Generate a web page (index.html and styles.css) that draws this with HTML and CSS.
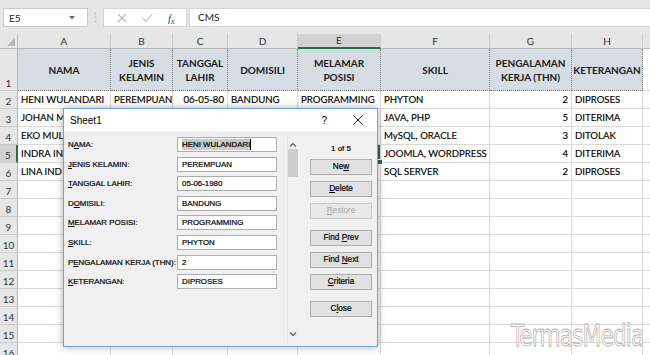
FILE: index.html
```html
<!DOCTYPE html>
<html>
<head>
<meta charset="utf-8">
<link rel="stylesheet" href="styles.css">
</head>
<body>
<div class="app">
  <div class="fbar">
    <div class="namebox"><span>E5</span>
      <svg class="nb-caret" width="6" height="4" viewBox="0 0 6 4"><path d="M0 0h6L3 3.5z" fill="#6a6a6a"/></svg>
    </div>
    <div class="fdots">
      <svg width="3" height="11" viewBox="0 0 3 11"><circle cx="1.5" cy="1.5" r="1" fill="#c4c4c4"/><circle cx="1.5" cy="5.5" r="1" fill="#c4c4c4"/><circle cx="1.5" cy="9.5" r="1" fill="#c4c4c4"/></svg>
    </div>
    <div class="fxbox">
      <svg width="10" height="10" viewBox="0 0 10 10"><path d="M1 1L9 9M9 1L1 9" stroke="#b8b8b8" stroke-width="1.1"/></svg>
      <svg width="11" height="10" viewBox="0 0 11 10"><path d="M1 5.5L4 8.5L10 1.5" stroke="#b8b8b8" stroke-width="1.1" fill="none"/></svg>
      <span class="fx">f<span class="fxs">x</span></span>
    </div>
    <div class="finput">CMS</div>
  </div>

  <div class="sheet">
    <div class="row hdr">
      <div class="corner"><svg width="8" height="8" viewBox="0 0 8 8"><path d="M8 0V8H0z" fill="#b5b5b5"/></svg></div>
      <div class="ch">A</div><div class="ch">B</div><div class="ch">C</div><div class="ch">D</div>
      <div class="ch sel">E</div><div class="ch">F</div><div class="ch">G</div><div class="ch">H</div><div class="ch"></div>
    </div>
    <div class="row r1">
      <div class="rh">1</div>
      <div class="th">NAMA</div>
      <div class="th">JENIS<br>KELAMIN</div>
      <div class="th">TANGGAL<br>LAHIR</div>
      <div class="th">DOMISILI</div>
      <div class="th">MELAMAR<br>POSISI</div>
      <div class="th">SKILL</div>
      <div class="th">PENGALAMAN<br>KERJA (THN)</div>
      <div class="th">KETERANGAN</div>
      <div class="c"></div>
    </div>
    <div class="row">
      <div class="rh">2</div>
      <div class="c">HENI WULANDARI</div><div class="c">PEREMPUAN</div><div class="c num">06-05-80</div><div class="c">BANDUNG</div><div class="c">PROGRAMMING</div><div class="c">PHYTON</div><div class="c num">2</div><div class="c">DIPROSES</div><div class="c"></div>
    </div>
    <div class="row">
      <div class="rh">3</div>
      <div class="c">JOHAN M</div><div class="c"></div><div class="c"></div><div class="c"></div><div class="c"></div><div class="c">JAVA, PHP</div><div class="c num">5</div><div class="c">DITERIMA</div><div class="c"></div>
    </div>
    <div class="row">
      <div class="rh">4</div>
      <div class="c">EKO MUL</div><div class="c"></div><div class="c"></div><div class="c"></div><div class="c"></div><div class="c">MySQL, ORACLE</div><div class="c num">3</div><div class="c">DITOLAK</div><div class="c"></div>
    </div>
    <div class="row">
      <div class="rh sel">5</div>
      <div class="c">INDRA IN</div><div class="c"></div><div class="c"></div><div class="c"></div><div class="c active">CMS</div><div class="c">JOOMLA, WORDPRESS</div><div class="c num">4</div><div class="c">DITERIMA</div><div class="c"></div>
    </div>
    <div class="row">
      <div class="rh">6</div>
      <div class="c">LINA IND</div><div class="c"></div><div class="c"></div><div class="c"></div><div class="c"></div><div class="c">SQL SERVER</div><div class="c num">2</div><div class="c">DIPROSES</div><div class="c"></div>
    </div>
    <div class="row"><div class="rh">7</div><div class="c"></div><div class="c"></div><div class="c"></div><div class="c"></div><div class="c"></div><div class="c"></div><div class="c"></div><div class="c"></div><div class="c"></div></div>
    <div class="row"><div class="rh">8</div><div class="c"></div><div class="c"></div><div class="c"></div><div class="c"></div><div class="c"></div><div class="c"></div><div class="c"></div><div class="c"></div><div class="c"></div></div>
    <div class="row"><div class="rh">9</div><div class="c"></div><div class="c"></div><div class="c"></div><div class="c"></div><div class="c"></div><div class="c"></div><div class="c"></div><div class="c"></div><div class="c"></div></div>
    <div class="row"><div class="rh">10</div><div class="c"></div><div class="c"></div><div class="c"></div><div class="c"></div><div class="c"></div><div class="c"></div><div class="c"></div><div class="c"></div><div class="c"></div></div>
    <div class="row"><div class="rh">11</div><div class="c"></div><div class="c"></div><div class="c"></div><div class="c"></div><div class="c"></div><div class="c"></div><div class="c"></div><div class="c"></div><div class="c"></div></div>
    <div class="row"><div class="rh">12</div><div class="c"></div><div class="c"></div><div class="c"></div><div class="c"></div><div class="c"></div><div class="c"></div><div class="c"></div><div class="c"></div><div class="c"></div></div>
    <div class="row"><div class="rh">13</div><div class="c"></div><div class="c"></div><div class="c"></div><div class="c"></div><div class="c"></div><div class="c"></div><div class="c"></div><div class="c"></div><div class="c"></div></div>
    <div class="row"><div class="rh">14</div><div class="c"></div><div class="c"></div><div class="c"></div><div class="c"></div><div class="c"></div><div class="c"></div><div class="c"></div><div class="c"></div><div class="c"></div></div>
    <div class="row"><div class="rh">15</div><div class="c"></div><div class="c"></div><div class="c"></div><div class="c"></div><div class="c"></div><div class="c"></div><div class="c"></div><div class="c"></div><div class="c"></div></div>
    <div class="row"><div class="rh">16</div><div class="c"></div><div class="c"></div><div class="c"></div><div class="c"></div><div class="c"></div><div class="c"></div><div class="c"></div><div class="c"></div><div class="c"></div></div>
  </div>

  <div class="dialog">
    <div class="dtitle">
      <span class="dname">Sheet1</span>
      <span class="dhelp">?</span>
      <svg class="dclose" width="10" height="10" viewBox="0 0 10 10"><path d="M0.5 0.5L9.5 9.5M9.5 0.5L0.5 9.5" stroke="#222" stroke-width="1"/></svg>
    </div>
    <div class="dbody">
      <div class="form">
        <label>N<u>A</u>MA:</label><div class="tb"><span class="hl">HENI WULANDARI</span><span class="caret"></span></div>
        <label><u>J</u>ENIS KELAMIN:</label><div class="tb">PEREMPUAN</div>
        <label><u>T</u>ANGGAL LAHIR:</label><div class="tb">05-06-1980</div>
        <label>D<u>O</u>MISILI:</label><div class="tb">BANDUNG</div>
        <label><u>M</u>ELAMAR POSISI:</label><div class="tb">PROGRAMMING</div>
        <label><u>S</u>KILL:</label><div class="tb">PHYTON</div>
        <label>P<u>E</u>NGALAMAN KERJA (THN):</label><div class="tb">2</div>
        <label><u>K</u>ETERANGAN:</label><div class="tb">DIPROSES</div>
      </div>
      <div class="vscroll">
        <svg class="arr" width="8" height="5" viewBox="0 0 8 5"><path d="M1 4.5L4 1.5L7 4.5" stroke="#555" stroke-width="1.1" fill="none"/></svg>
        <div class="thumb"></div>
        <div class="track"></div>
        <svg class="arr" width="8" height="5" viewBox="0 0 8 5"><path d="M1 0.5L4 3.5L7 0.5" stroke="#555" stroke-width="1.1" fill="none"/></svg>
      </div>
      <div class="btns">
        <div class="count">1 of 5</div>
        <div class="btn">Ne<u>w</u></div>
        <div class="btn"><u>D</u>elete</div>
        <div class="btn dis"><u>R</u>estore</div>
        <div class="btn sp">Find <u>P</u>rev</div>
        <div class="btn">Find <u>N</u>ext</div>
        <div class="btn"><u>C</u>riteria</div>
        <div class="btn sp">C<u>l</u>ose</div>
      </div>
    </div>
  </div>

  <div class="watermark">TermasMedia</div>
</div>
</body>
</html>
```

FILE: styles.css
```css
html, body {
  margin: 0;
  padding: 0;
  background: #fff;
}
.app {
  position: relative;
  width: 650px;
  height: 355px;
  overflow: hidden;
  font-family: "Lato", "Liberation Sans", sans-serif;
}

/* formula bar */
.fbar {
  height: 34px;
  box-sizing: border-box;
  background: #e6e6e6;
  display: flex;
  align-items: flex-start;
  padding: 8px 0 0 3px;
}
.namebox {
  width: 85px;
  height: 19px;
  box-sizing: border-box;
  background: #fff;
  border: 1px solid #c9c9c9;
  display: flex;
  align-items: center;
  justify-content: space-between;
  padding: 0 12px 0 5px;
  font-size: 10px;
  color: #222;
}
.fdots {
  width: 15px;
  height: 19px;
  display: flex;
  align-items: center;
  justify-content: center;
}
.fxbox {
  width: 84px;
  height: 19px;
  box-sizing: border-box;
  background: #fff;
  border: 1px solid #d4d4d4;
  display: flex;
  align-items: center;
  justify-content: space-around;
  padding: 0 4px 0 6px;
}
.fx {
  font-family: "Liberation Serif", serif;
  font-style: italic;
  font-size: 11px;
  color: #444;
}
.fxs {
  font-size: 8px;
  position: relative;
  top: 2px;
}
.finput {
  flex: 1;
  height: 19px;
  box-sizing: border-box;
  margin-left: 2px;
  background: #fff;
  border: 1px solid #d4d4d4;
  border-right: none;
  font-size: 10px;
  line-height: 17px;
  padding-left: 8px;
  color: #222;
}

/* sheet */
.row {
  display: grid;
  grid-template-columns: 18px 93px 62px 55px 70px 83px 109px 82px 71px 20px;
  height: 18px;
}
.row.hdr { height: 15px; }
.row.r1 { height: 42px; }
.corner {
  background: #e6e6e6;
  border-right: 1px solid #c6c6c6;
  border-bottom: 1px solid #b8b8b8;
  display: flex;
  align-items: flex-end;
  justify-content: flex-end;
  padding: 0 2px 2px 0;
}
.ch {
  background: #e6e6e6;
  border-right: 1px solid #cdcdcd;
  border-bottom: 1px solid #b8b8b8;
  text-align: center;
  font-size: 10px;
  line-height: 14px;
  color: #333;
}
.ch.sel {
  background: #d2d2d2;
  border-bottom: 2px solid #217346;
  line-height: 13px;
}
.rh {
  background: #e6e6e6;
  border-right: 1px solid #b8b8b8;
  border-bottom: 1px solid #cdcdcd;
  font-size: 10px;
  color: #333;
  display: flex;
  align-items: flex-end;
  justify-content: center;
  padding-bottom: 1px;
  line-height: 12px;
}
.rh.sel {
  background: #d2d2d2;
  border-right: 2px solid #217346;
}
.c {
  border-right: 1px solid #dadada;
  border-bottom: 1px solid #dadada;
  font-size: 9.6px;
  line-height: 17px;
  padding: 0 3px;
  white-space: nowrap;
  color: #000;
  overflow: visible;
  -webkit-text-stroke: 0.15px #000;
}
.c.num { text-align: right; }
.c.active {
  position: relative;
  box-shadow: inset 0 0 0 2px #217346;
}
.c.active::after {
  content: "";
  position: absolute;
  right: -3px;
  bottom: -3px;
  width: 4px;
  height: 4px;
  background: #217346;
  border: 1px solid #fff;
}
.th {
  background: #d6dce4;
  border-right: 1px dotted #7d7d7d;
  border-bottom: 1px dotted #7d7d7d;
  font-size: 10px;
  font-weight: bold;
  line-height: 14px;
  color: #1a1a1a;
  display: flex;
  align-items: center;
  justify-content: center;
  text-align: center;
  white-space: nowrap;
}

/* dialog */
.dialog {
  position: absolute;
  left: 63px;
  top: 108px;
  width: 315px;
  height: 239px;
  box-sizing: border-box;
  border: 1px solid #74a4d8;
  background: #f0f0f0;
  box-shadow: 0 0 7px rgba(0,0,0,0.35);
  display: flex;
  flex-direction: column;
  font-family: "Liberation Sans", Arial, sans-serif;
  color: #000;
}
.dtitle {
  height: 22px;
  background: #fff;
  display: flex;
  align-items: center;
  padding-left: 6px;
  font-size: 10px;
}
.dname { flex: 1; }
.dhelp {
  font-size: 10px;
  margin-right: 26px;
}
.dclose { margin-right: 14px; }
.dbody {
  flex: 1;
  display: flex;
  padding: 6px 0 0 4px;
}
.form {
  width: 209px;
  display: grid;
  grid-template-columns: 109px 100px;
  grid-auto-rows: 15px;
  row-gap: 4.6px;
  align-content: start;
  font-size: 7.9px;
}
.form label {
  line-height: 15px;
  white-space: nowrap;
  -webkit-text-stroke: 0.2px #000;
}
.tb {
  box-sizing: border-box;
  background: #fff;
  border: 1px solid #adadad;
  line-height: 13px;
  padding-left: 4px;
  white-space: nowrap;
  display: flex;
  align-items: center;
  -webkit-text-stroke: 0.2px #000;
}
.hl {
  background: #c9c9c9;
  line-height: 11px;
}
.caret {
  width: 1px;
  height: 11px;
  background: #000;
}
.vscroll {
  width: 11px;
  margin-left: 10px;
  height: 206px;
  border-left: 1px solid #e2e2e2;
  display: flex;
  flex-direction: column;
  align-items: center;
  padding-top: 5px;
  box-sizing: border-box;
}
.thumb {
  width: 10px;
  height: 28px;
  background: #cdcdcd;
  margin-top: 2px;
}
.track { flex: 1; }
.vscroll .arr:last-child { margin-bottom: 6px; }
.btns {
  width: 62px;
  margin-left: 12px;
  display: flex;
  flex-direction: column;
  gap: 6px;
}
.count {
  height: 16px;
  margin-top: 4px;
  margin-bottom: -4px;
  line-height: 16px;
  text-align: center;
  font-size: 8px;
  -webkit-text-stroke: 0.2px #000;
}
.btn {
  height: 16px;
  box-sizing: border-box;
  background: #e1e1e1;
  border: 1px solid #adadad;
  text-align: center;
  line-height: 14px;
  font-size: 8.2px;
  -webkit-text-stroke: 0.2px #000;
}
.btn.dis {
  background: #e8e8e8;
  border-color: #c8c8c8;
  color: #a8a8a8;
  -webkit-text-stroke: 0;
}
.btn.sp { margin-top: 5px; }

.watermark {
  position: absolute;
  left: 511px;
  top: 321px;
  font-family: "DejaVu Sans Condensed", "Liberation Sans", sans-serif;
  font-size: 30px;
  line-height: 30px;
  letter-spacing: -1px;
  color: #fff;
  -webkit-text-stroke: 0.8px #b0b0b0;
  transform: scaleX(0.8);
  transform-origin: left top;
  white-space: nowrap;
}
```
